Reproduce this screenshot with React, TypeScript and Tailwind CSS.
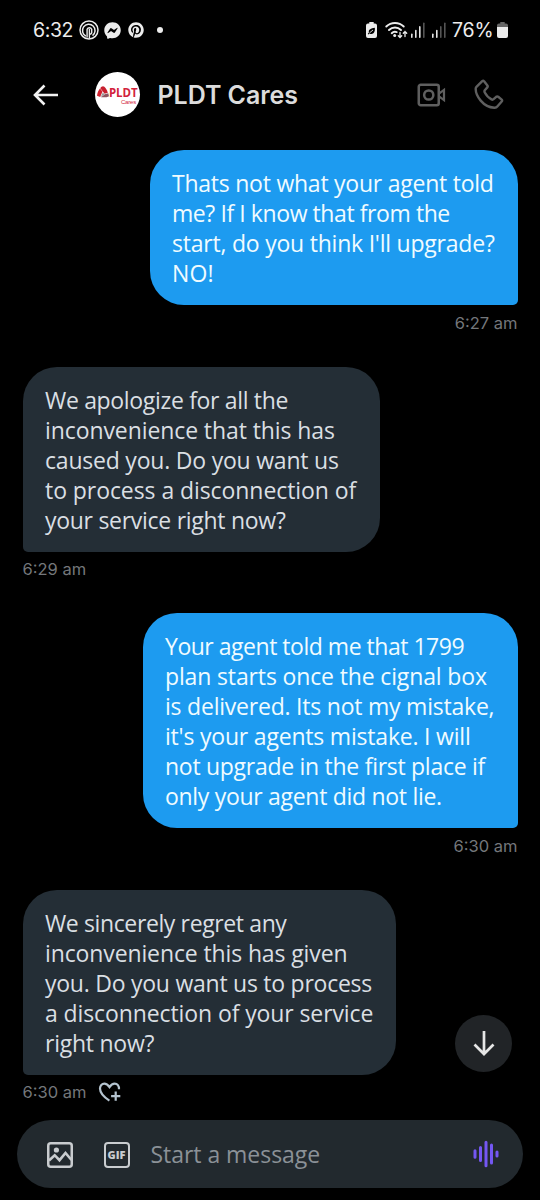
import { FaFacebookMessenger, FaPinterest } from "react-icons/fa";

type Line = [text: string, tracking: string];

type Message = {
  mine: boolean;
  time: string;
  width: string;
  lines: Line[];
  reactable?: boolean;
};

const messages: Message[] = [
  {
    mine: true,
    time: "6:27 am",
    width: "w-[368px]",
    lines: [
      ["Thats not what your agent told", "tracking-[-0.24px]"],
      ["me? If I know that from the", "tracking-[-0.42px]"],
      ["start, do you think I'll upgrade?", "tracking-[-0.22px]"],
      ["NO!", "tracking-[0.1px]"],
    ],
  },
  {
    mine: false,
    time: "6:29 am",
    width: "w-[357px]",
    lines: [
      ["We apologize for all the", "tracking-[-0.33px]"],
      ["inconvenience that this has", "tracking-[-0.09px]"],
      ["caused you. Do you want us", "tracking-[-0.21px]"],
      ["to process a disconnection of", "tracking-[-0.07px]"],
      ["your service right now?", "tracking-[-0.28px]"],
    ],
  },
  {
    mine: true,
    time: "6:30 am",
    width: "w-[375px]",
    lines: [
      ["Your agent told me that 1799", "tracking-[-0.48px]"],
      ["plan starts once the cignal box", "tracking-[-0.14px]"],
      ["is delivered. Its not my mistake,", "tracking-[-0.22px]"],
      ["it's your agents mistake. I will", "tracking-[-0.2px]"],
      ["not upgrade in the first place if", "tracking-[-0.28px]"],
      ["only your agent did not lie.", "tracking-[-0.3px]"],
    ],
  },
  {
    mine: false,
    time: "6:30 am",
    width: "w-[373px]",
    reactable: true,
    lines: [
      ["We sincerely regret any", "tracking-[-0.38px]"],
      ["inconvenience this has given", "tracking-[-0.12px]"],
      ["you. Do you want us to process", "tracking-[-0.25px]"],
      ["a disconnection of your service", "tracking-[-0.1px]"],
      ["right now?", "tracking-[-0.25px]"],
    ],
  },
];

function SignalBars({ lit }: { lit: number }) {
  return (
    <svg width="14" height="16" viewBox="0 0 14 16">
      {[0, 1, 2, 3].map((i) => (
        <rect
          key={i}
          x={i * 4}
          y={11.5 - i * 3.7}
          width="1.6"
          height={4.5 + i * 3.7}
          rx="0.8"
          fill={i < lit ? "#e4e4e4" : "#555"}
        />
      ))}
    </svg>
  );
}

function StatusBar() {
  return (
    <div className="flex h-[60px] shrink-0 items-center pl-[33px] pr-8 text-[#ececec]">
      <span className="w-[46px] font-['Inter',sans-serif] text-[19.5px] leading-[24px] tracking-[-0.4px]">6:32</span>
      <svg width="20" height="20" viewBox="0 0 20 20" fill="none" stroke="currentColor" strokeWidth="1.5">
        <circle cx="10" cy="10" r="9" />
        <path d="M7 16.2A6.3 6.3 0 1 1 13.5 15.6" />
        <path d="M8.1 17.5V9.3a2.5 2.5 0 0 1 4.6 0v2.4a2.3 2.3 0 0 1-1.7 2.6" strokeWidth="1.4" />
        <path d="M10.4 8.8v9.6" strokeWidth="1.4" />
      </svg>
      <FaFacebookMessenger className="ml-[5px] size-[17px]" />
      <FaPinterest className="ml-[7px] size-4" />
      <span className="ml-[13px] size-1.5 rounded-full bg-[#ececec]" />
      <svg className="ml-auto" width="11" height="16" viewBox="0 0 11 16">
        <path d="M3.3 0h4.4v1.6H9a2 2 0 0 1 2 2V14a2 2 0 0 1-2 2H2a2 2 0 0 1-2-2V3.6a2 2 0 0 1 2-2h1.3z" fill="#ececec" />
        <path d="M8.8 5.8c.5 3.7-1 6.2-3.3 6.2-.8 0-1.4-.2-1.9-.6l-1.2 1-.6-.6 1.1-1.3C2.2 7.3 5 6.4 8.8 5.8z" fill="#000" />
        <path d="M3.5 10.9 7 8" stroke="#ececec" strokeWidth="0.9" />
      </svg>
      <svg className="ml-[8px]" width="23" height="18" viewBox="0 0 23 18" fill="none" stroke="currentColor" strokeWidth="1.9" strokeLinecap="round">
        <path d="M1.3 5.5a12.5 12.5 0 0 1 17.4 0" />
        <path d="M4 9a8.6 8.6 0 0 1 12 0" />
        <path d="M6.7 12.2a4.8 4.8 0 0 1 5-1.1" />
        <circle cx="9.7" cy="14.6" r="1.5" fill="currentColor" stroke="none" />
        <path d="M15 11.5v5m-1.7-1.7 1.7 1.7 1.7-1.7M20 15.5v-5m-1.7 1.7L20 10.5l1.7 1.7" strokeWidth="1.3" />
      </svg>
      <div className="ml-[3px]"><SignalBars lit={3} /></div>
      <div className="ml-[7px]"><SignalBars lit={2} /></div>
      <span className="ml-[6px] w-[45px] whitespace-nowrap font-['Inter',sans-serif] text-[19.5px] leading-[24px] tracking-[-0.2px]">76%</span>
      <svg width="11" height="16" viewBox="0 0 11 16">
        <path d="M3.3 0h4.4v1.6H9a2 2 0 0 1 2 2V6H0V3.6a2 2 0 0 1 2-2h1.3z" fill="#666" />
        <path d="M0 5h11v9a2 2 0 0 1-2 2H2a2 2 0 0 1-2-2z" fill="#ececec" />
      </svg>
    </div>
  );
}

function Avatar() {
  return (
    <div className="ml-[37px] flex size-[45px] items-start overflow-hidden rounded-full bg-white pl-[2px] pt-[14px]">
      <svg width="12" height="12" viewBox="0 0 12 12">
        <path d="M6 .3c1.8 0 3.8 3 4.8 6.5L7.6 7.8 3.3 2.2C4.1 1 5 .3 6 .3z" fill="#c8202f" />
        <path d="M3 2.5 5.5 5.600 3.2 11 0 9.7C.4 6.6 1.5 4.2 3 2.5z" fill="#d3222f" />
        <path d="M7.8 8.2 11.3 7.2l.7 3c-1.5 1-4.6 1.3-8 1.1z" fill="#8e5560" />
        <path d="m5.7 6.4 2 1.9-3.9 2.8z" fill="#999" />
      </svg>
      <div className="flex w-[29px] flex-col items-end">
        <span className="h-[13px] w-[29px] whitespace-nowrap font-['Open_Sans',sans-serif] text-[11.5px] font-bold leading-[13px] tracking-[-0.1px] text-[#d2233c]">PLDT</span>
        <span className="mr-[2px] whitespace-nowrap font-['Liberation_Sans',sans-serif] text-[6px] leading-[7px] tracking-[-0.2px] text-[#d2233c]">Cares</span>
      </div>
    </div>
  );
}

function Header() {
  return (
    <header className="flex h-[69px] shrink-0 items-center pl-[33px]">
      <svg width="25" height="22" viewBox="0 0 25 22" fill="none" stroke="#f2f2f2" strokeWidth="2.6">
        <path d="M2.2 11H25M11.5 1.5 2 11l9.5 9.5" />
      </svg>
      <Avatar />
      <h1 className="ml-[17.5px] w-[259.5px] whitespace-nowrap font-['Inter',sans-serif] text-[25px] font-semibold leading-[34px] tracking-[-0.05px] text-[#dcdcdc]">PLDT Cares</h1>
      <svg width="30" height="24" viewBox="0 0 30 24" fill="none" stroke="#5f5f5f" strokeWidth="2.5">
        <rect x="1.75" y="1.75" width="20" height="20.5" rx="2" />
        <circle cx="11.75" cy="12" r="4.6" />
        <path d="m22 10.6 5-3.7v10.200l-5-3.7" strokeWidth="2.2" />
      </svg>
      <svg className="ml-[26.5px]" width="30" height="32" viewBox="0 0 30 32" fill="none" stroke="#5f5f5f" strokeWidth="2.4" strokeLinejoin="round">
        <path d="M2.2 8.2 8.2 2.2Q9.2 1.4 10.1 2.3L13.4 6.5Q14.1 7.4 13.3 8.4L10.8 11.2Q10.1 12.1 10.8 13.5 13.3 18.3 17.5 20.4 18.7 21 19.6 20.2L22.2 17.8Q23.2 17 24.2 17.8L27.7 20.7Q28.6 21.5 27.7 22.5L23.3 27.5Q22.2 28.9 20.2 28.7 12.4 28.3 6.7 21.6 1.6 15.6 1.7 9.8 1.7 8.8 2.2 8.2z" />
      </svg>
    </header>
  );
}

function HeartPlus() {
  return (
    <svg className="ml-[12px]" width="24" height="21" viewBox="0 0 24 21" fill="none" stroke="#b4c3cf" strokeWidth="2.2">
      <path d="M11.4 18.7C5.7 15 2 11 2 6.6 2 3.7 4 1.7 6.3 1.7c2 0 3.7 1.2 5.2 3.4 1.4-2.2 3.1-3.4 5.2-3.4 2.6 0 4.500 2.1 4.3 5.5" />
      <path d="M17.7 9.5v9.2M13.1 14.1h9.2" />
    </svg>
  );
}

function Bubble({ message }: { message: Message }) {
  const { mine, time, width, lines, reactable } = message;
  return (
    <div className={`flex flex-col ${mine ? "items-end" : "items-start"}`}>
      <div
        className={`${width} rounded-[34px] pt-[18px] pb-[17px] pl-[22.5px] text-[23px] leading-[30px] ${
          mine ? "rounded-br-[5px] bg-[#1d9bf0] text-[#f0fbff]" : "rounded-bl-[5px] bg-[#242e36] text-[#dadfe3]"
        }`}
      >
        {lines.map(([text, tracking]) => (
          <span key={text} className={`block whitespace-nowrap ${tracking}`}>
            {text}
          </span>
        ))}
      </div>
      <div className="flex h-[35.5px] items-center font-['Inter',sans-serif] text-[16.5px] leading-[24px] text-[#74777b]">
        <span>{time}</span>
        {reactable && <HeartPlus />}
      </div>
    </div>
  );
}

function Composer() {
  return (
    <div className="mx-[17px] mt-[10px] flex h-[68px] shrink-0 items-center rounded-full bg-[#22292e] pl-[29.5px] pr-[24px]">
      <svg className="mt-[2px]" width="26" height="26" viewBox="0 0 26 26" fill="none" stroke="#c9cccf" strokeWidth="2.5">
        <rect x="1.25" y="1.25" width="23.5" height="23.5" rx="2.5" />
        <path d="m2 18.5 5.7-5.3 4.8 5 6-7.2 6 7" strokeWidth="2.6" />
        <circle cx="9.4" cy="8" r="2.6" fill="#c9cccf" stroke="none" />
      </svg>
      <div className="ml-[31px] mt-[2px] flex size-[26px] items-center justify-center rounded-[4px] border-[2.5px] border-[#c9cccf]">
        <span className="font-['Open_Sans',sans-serif] text-[11px] font-extrabold leading-[12px] text-[#c9cccf]">GIF</span>
      </div>
      <span className="ml-[21px] grow whitespace-nowrap text-[23px] leading-[30px] tracking-[-0.04px] text-[#8b9197]">Start a message</span>
      <svg width="26" height="28" viewBox="0 0 26 28" stroke="#7457f2" strokeWidth="3" strokeLinecap="round">
        <path d="M2 10.8v6.4M7.5 7.5v13M13 2.3v23.4M18.5 5v18M24 12v4" />
      </svg>
    </div>
  );
}

export default function App() {
  return (
    <div className="relative flex h-[1200px] w-[540px] flex-col overflow-hidden bg-black font-['Open_Sans',sans-serif]">
      <StatusBar />
      <Header />
      <main className="flex flex-col gap-[26px] px-[22.5px] pt-[21px]">
        {messages.map((message, i) => (
          <Bubble key={i} message={message} />
        ))}
      </main>
      <Composer />
      <button className="absolute right-[28px] top-[1015px] flex size-[57px] items-center justify-center rounded-full bg-[#212427]">
        <svg width="22" height="25" viewBox="0 0 22 25" fill="none" stroke="#e6e6e6" strokeWidth="2.7">
          <path d="M11 0v23M1.5 13.5 11 23l9.5-9.5" />
        </svg>
      </button>
    </div>
  );
}
